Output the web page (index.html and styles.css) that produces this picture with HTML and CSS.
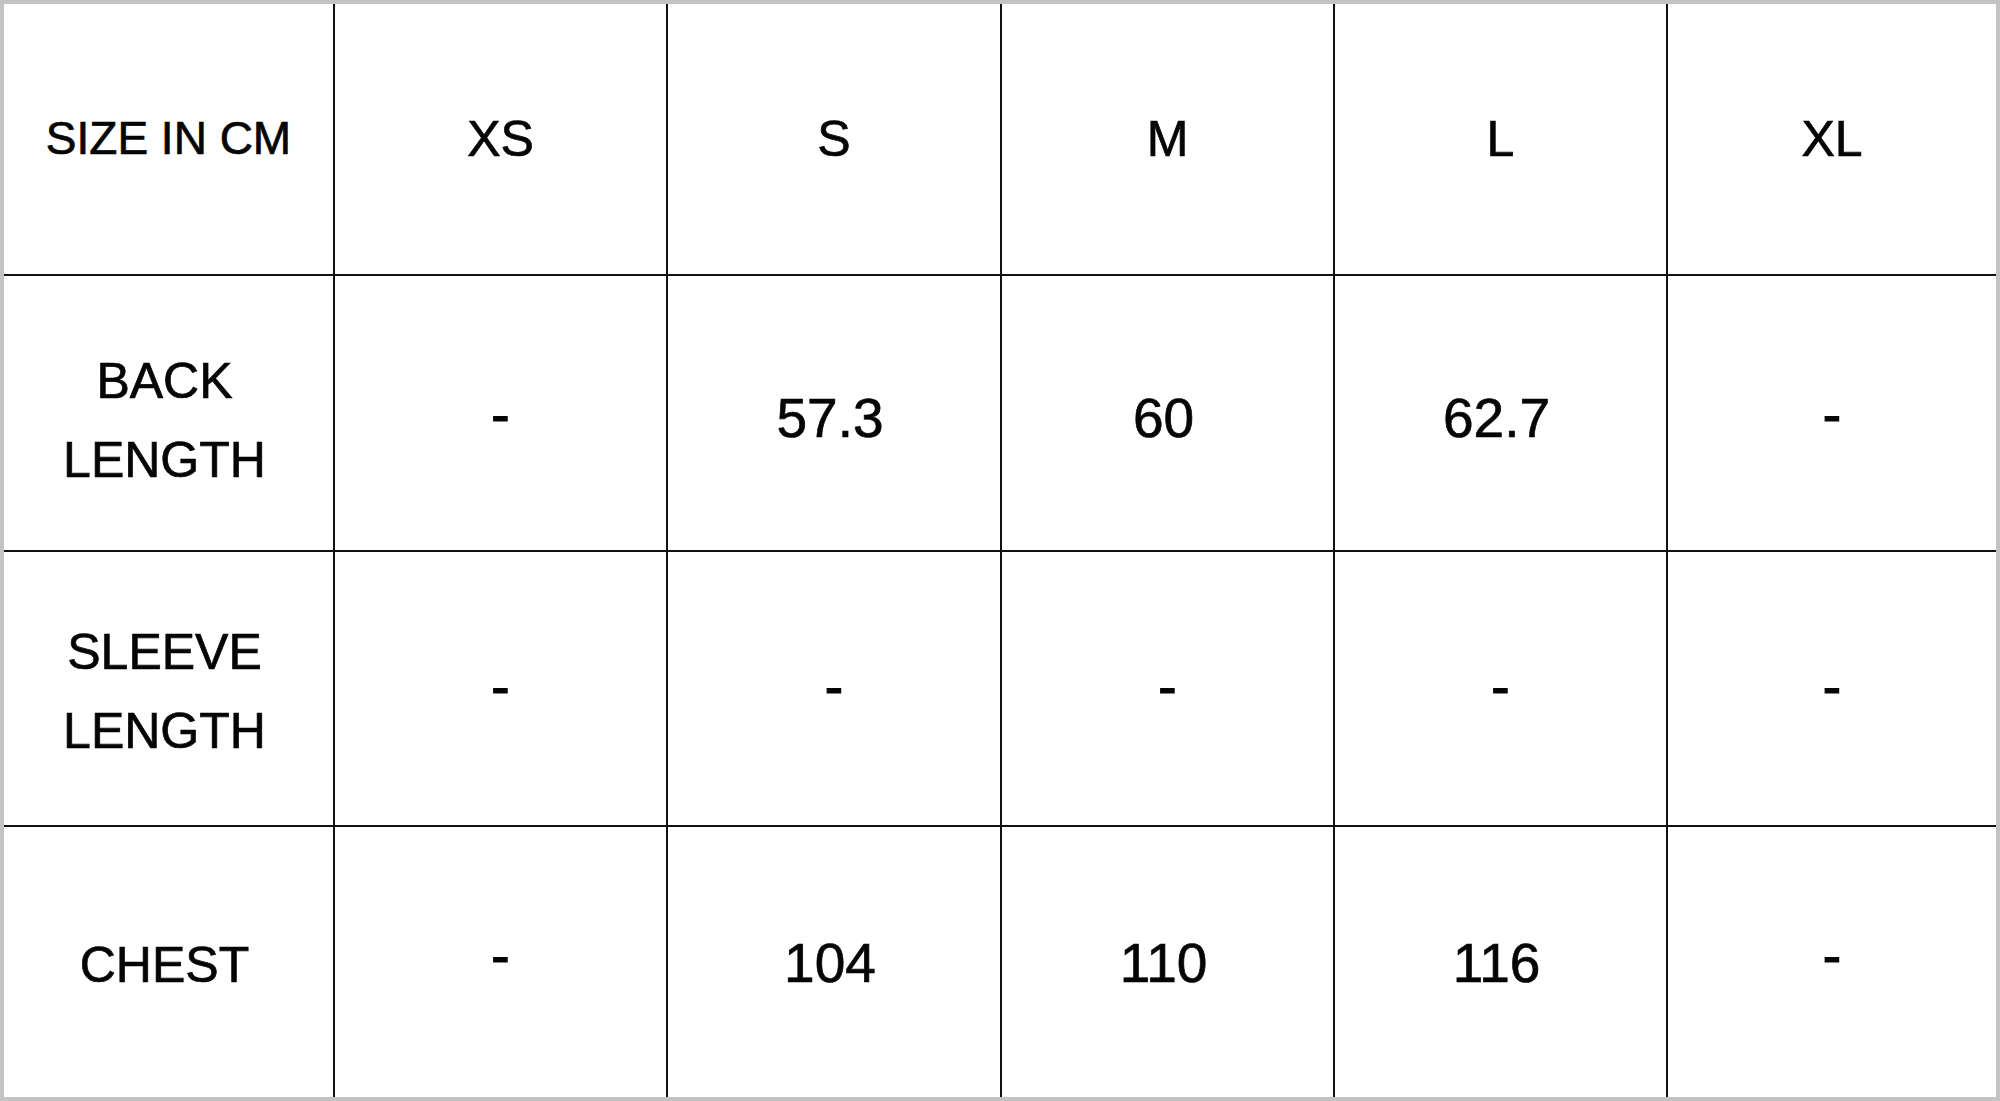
FILE: index.html
```html
<!DOCTYPE html>
<html>
<head>
<meta charset="utf-8">
<link rel="stylesheet" href="styles.css">
</head>
<body>
<div class="frame">
  <div class="size-table">
    <div class="cell head corner">SIZE IN CM</div>
    <div class="cell head size">XS</div>
    <div class="cell head size">S</div>
    <div class="cell head size">M</div>
    <div class="cell head size">L</div>
    <div class="cell head size last">XL</div>

    <div class="cell label r2">BACK<br>LENGTH</div>
    <div class="cell dash r2">-</div>
    <div class="cell val r2">57.3</div>
    <div class="cell val r2">60</div>
    <div class="cell val r2">62.7</div>
    <div class="cell dash r2 last">-</div>

    <div class="cell label r3">SLEEVE<br>LENGTH</div>
    <div class="cell dash r3">-</div>
    <div class="cell dash r3">-</div>
    <div class="cell dash r3">-</div>
    <div class="cell dash r3">-</div>
    <div class="cell dash r3 last">-</div>

    <div class="cell label r4 bottom">CHEST</div>
    <div class="cell dash r4 bottom">-</div>
    <div class="cell val r4 bottom">104</div>
    <div class="cell val r4 bottom">110</div>
    <div class="cell val r4 bottom">116</div>
    <div class="cell dash r4 bottom last">-</div>
  </div>
</div>
</body>
</html>
```

FILE: styles.css
```css
html, body {
  margin: 0;
  padding: 0;
  background: #ffffff;
}

.frame {
  box-sizing: border-box;
  width: 2000px;
  height: 1101px;
  border: 4px solid #c3c3c3;
  background: #ffffff;
}

.size-table {
  display: grid;
  grid-template-columns: 331px 333px 334px 333px 333px 328px;
  grid-template-rows: 272px 276px 275px 270px;
  width: 1992px;
  height: 1093px;
  font-family: "Liberation Sans", Arial, Helvetica, sans-serif;
  color: #050505;
  -webkit-text-stroke: 0.7px #050505;
}

.cell {
  box-sizing: border-box;
  display: flex;
  align-items: center;
  justify-content: center;
  text-align: center;
  border-right: 2px solid #111111;
  border-bottom: 2px solid #111111;
}

.cell.last {
  border-right: none;
}

.cell.bottom {
  border-bottom: none;
}

.head.corner {
  font-size: 46px;
  padding-bottom: 2px;
}

.head.size {
  font-size: 50px;
}

.label {
  font-size: 50px;
  line-height: 79px;
  padding-right: 8px;
}

.label.r2 {
  padding-top: 16px;
}

.label.r3 {
  padding-top: 6px;
}

.label.r4 {
  padding-top: 6px;
}

.val {
  font-size: 55px;
  padding-right: 8px;
}

.val.r2 {
  padding-top: 10px;
}

.val.r4 {
  padding-top: 2px;
}

.dash {
  font-size: 55px;
  -webkit-text-stroke: 1.2px #050505;
}

.dash.r2 {
  padding-top: 4px;
}

.dash.r3 {
  padding-bottom: 4px;
}

.dash.r4 {
  padding-bottom: 12px;
}
```
